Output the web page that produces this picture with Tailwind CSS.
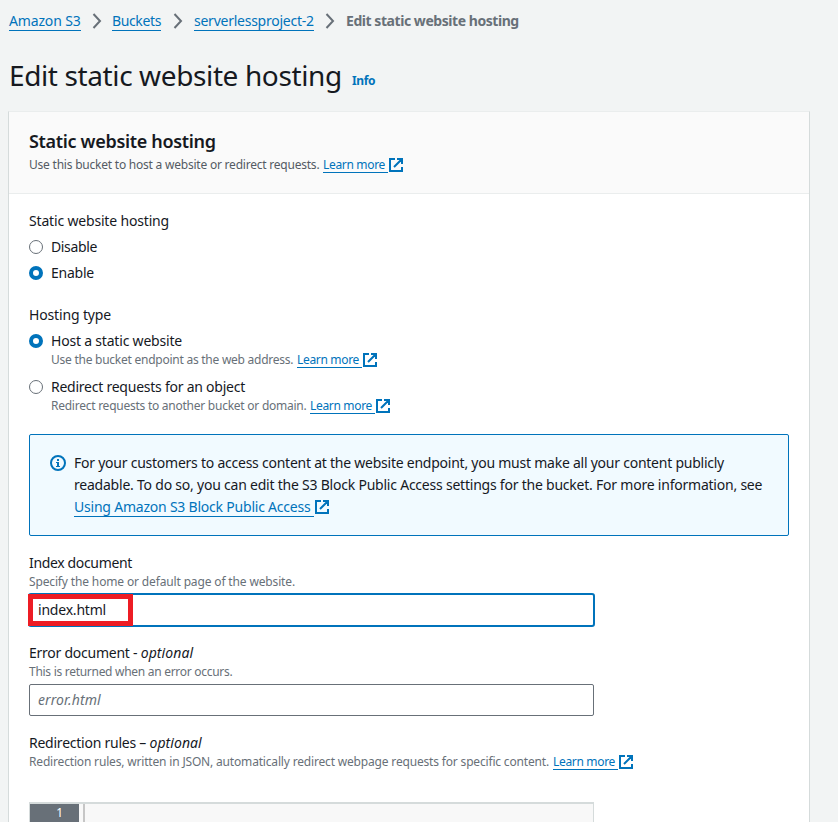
<!DOCTYPE html>
<html lang="en">
<head>
<meta charset="utf-8">
<title>Edit static website hosting</title>
<script src="https://cdn.jsdelivr.net/npm/@tailwindcss/browser@4"></script>
</head>
<body class="h-[822px] w-[838px] overflow-hidden bg-[#f2f4f4] font-['Noto_Sans','Open_Sans',sans-serif] text-[14px] leading-[22px] whitespace-nowrap text-[#16191f]">
<svg class="hidden">
  <symbol id="ext" viewBox="0 0 14 14"><path d="M6 1H1v12h12V9M8 1h5v5M12.500 1.500 5 9" fill="none" stroke="#0073bb" stroke-width="2"/></symbol>
  <symbol id="chev" viewBox="0 0 10 16"><path d="M1.500 1 8 8l-6.500 7" fill="none" stroke="#687078" stroke-width="2"/></symbol>
</svg>
<nav class="flex h-[32px] items-start pt-[10px] pl-[9px] text-[#0073bb]">
  <a class="h-[21px] w-[72px] border-b border-[#0073bb] tracking-[-0.15px]">Amazon S3</a>
  <svg class="mt-[3px] ml-[11px] h-[16px] w-[10px]"><use href="#chev"/></svg>
  <a class="ml-[10px] h-[21px] w-[49px] border-b border-[#0073bb] tracking-[-0.373px]">Buckets</a>
  <svg class="mt-[3px] ml-[12px] h-[16px] w-[10px]"><use href="#chev"/></svg>
  <a class="ml-[11px] h-[21px] w-[120px] border-b border-[#0073bb] tracking-[-0.25px]">serverlessproject-2</a>
  <svg class="mt-[3px] ml-[11px] h-[16px] w-[10px]"><use href="#chev"/></svg>
  <span class="ml-[11px] font-bold tracking-[-0.446px] text-[#687078]">Edit static website hosting</span>
</nav>
<header class="flex h-[79px] items-start pt-[25px] pl-[9px]">
  <h1 class="w-[343px] text-[28px] leading-[36px] tracking-[-0.38px]">Edit static website hosting</h1>
  <a class="mt-[13px] text-[12px] leading-[22px] font-bold tracking-[-0.406px] text-[#0073bb]">Info</a>
</header>
<main class="ml-[8px] h-[720px] w-[802px] border border-[#d5dbdb] border-t-[#eaeded] bg-white">
  <div class="h-[82px] border-b border-[#eaeded] bg-[#fafafa] pt-[18px] pl-[20px]">
    <h2 class="text-[18px] leading-[22px] font-semibold tracking-[-0.32px]">Static website hosting</h2>
    <div class="mt-[5px] flex text-[12px] leading-[16px] text-[#545b64]">
      <span class="w-[294px] tracking-[-0.22px]">Use this bucket to host a website or redirect requests.</span>
      <a class="h-[16px] w-[65px] border-b border-[#0073bb] tracking-[-0.325px] text-[#0073bb]">Learn more</a>
      <svg class="mt-px ml-[1px] h-[14px] w-[14px]"><use href="#ext"/></svg>
    </div>
  </div>
  <div class="pt-[16px] pl-[20px]">
    <div class="tracking-[-0.173px]">Static website hosting</div>
    <div class="mt-[4px] flex items-center gap-[8px] tracking-[-0.359px]"><i class="size-[14px] rounded-full border border-[#687078] bg-white"></i>Disable</div>
    <div class="mt-[4px] flex items-center gap-[8px] tracking-[-0.237px]"><i class="size-[14px] rounded-full border-4 border-[#0073bb] bg-white"></i>Enable</div>
    <div class="mt-[20px] tracking-[-0.152px]">Hosting type</div>
    <div class="mt-[4px] flex items-center gap-[8px] tracking-[-0.198px]"><i class="size-[14px] rounded-full border-4 border-[#0073bb] bg-white"></i>Host a static website</div>
    <div class="flex h-[16px] pl-[22px] text-[12px] leading-[16px] text-[#687078]">
      <span class="w-[246px] tracking-[-0.25px]">Use the bucket endpoint as the web address.</span>
      <a class="h-[16px] w-[65px] border-b border-[#0073bb] tracking-[-0.325px] text-[#0073bb]">Learn more</a>
      <svg class="mt-px ml-[1px] h-[14px] w-[14px]"><use href="#ext"/></svg>
    </div>
    <div class="mt-[8px] flex items-center gap-[8px] tracking-[-0.242px]"><i class="size-[14px] rounded-full border border-[#687078] bg-white"></i>Redirect requests for an object</div>
    <div class="flex h-[16px] pl-[22px] text-[12px] leading-[16px] text-[#687078]">
      <span class="w-[259px] tracking-[-0.25px]">Redirect requests to another bucket or domain.</span>
      <a class="h-[16px] w-[65px] border-b border-[#0073bb] tracking-[-0.325px] text-[#0073bb]">Learn more</a>
      <svg class="mt-px ml-[1px] h-[14px] w-[14px]"><use href="#ext"/></svg>
    </div>
    <section class="mt-[20px] flex h-[102px] w-[760px] rounded-[2px] border border-[#0073bb] bg-[#f1faff] pt-[17px] pl-[20px]">
      <svg class="mt-[3px] mr-[8px] size-[16px] shrink-0" viewBox="0 0 16 16"><circle cx="8" cy="8" r="7" fill="none" stroke="#0073bb" stroke-width="2"/><path d="M7 4h2v2H7zM6 7h3v4h1v1H6v-1h1V8H6z" fill="#0073bb"/></svg>
      <div>
        <div class="tracking-[-0.241px]">For your customers to access content at the website endpoint, you must make all your content publicly</div>
        <div class="tracking-[-0.222px]">readable. To do so, you can edit the S3 Block Public Access settings for the bucket. For more information, see</div>
        <div class="flex"><a class="h-[21px] w-[240px] border-b border-[#0073bb] tracking-[-0.215px] text-[#0073bb]">Using Amazon S3 Block Public Access</a><svg class="mt-[4px] ml-[1px] h-[14px] w-[14px]"><use href="#ext"/></svg></div>
      </div>
    </section>
    <div class="mt-[16px] tracking-[-0.345px]">Index document</div>
    <div class="text-[12px] leading-[16px] tracking-[-0.145px] text-[#687078]">Specify the home or default page of the website.</div>
    <div class="relative mt-[3px] -ml-px h-[34px] w-[567px] rounded-[3px] border-2 border-[#0073bb] pt-[4px] pl-[8px] tracking-[-0.206px]">index.html
      <div class="absolute -top-[1px] -left-[2px] h-[32px] w-[105px] border-[5px] border-[#ed1c24]"></div>
    </div>
    <div class="mt-[15px] tracking-[-0.249px]">Error document - <em class="tracking-[0.08px]">optional</em></div>
    <div class="text-[12px] leading-[16px] tracking-[-0.285px] text-[#687078]">This is returned when an error occurs.</div>
    <div class="mt-[4px] h-[32px] w-[565px] rounded-[2px] border border-[#687078] pt-[4px] pl-[8px] tracking-[0.09px] text-[#687078] italic">error.html</div>
    <div class="mt-[16px] tracking-[-0.24px]">Redirection rules – <em class="tracking-[0.05px]">optional</em></div>
    <div class="flex text-[12px] leading-[16px] text-[#687078]">
      <span class="w-[524px] tracking-[-0.173px]">Redirection rules, written in JSON, automatically redirect webpage requests for specific content.</span>
      <a class="h-[16px] w-[65px] border-b border-[#0073bb] tracking-[-0.325px] text-[#0073bb]">Learn more</a>
      <svg class="mt-px ml-[1px] h-[14px] w-[14px]"><use href="#ext"/></svg>
    </div>
    <div class="mt-[32px] flex h-[30px] w-[565px] border border-t-2 border-[#d5dbdb] bg-[#f8f8f8]">
      <div class="w-[49px] bg-[#687078] pt-px pr-[16px] text-right text-[12px] leading-[16px] text-white">1</div>
      <div class="ml-[4px] w-[2px] bg-[#c6c6c6]"></div>
    </div>
  </div>
</main>
</body>
</html>
